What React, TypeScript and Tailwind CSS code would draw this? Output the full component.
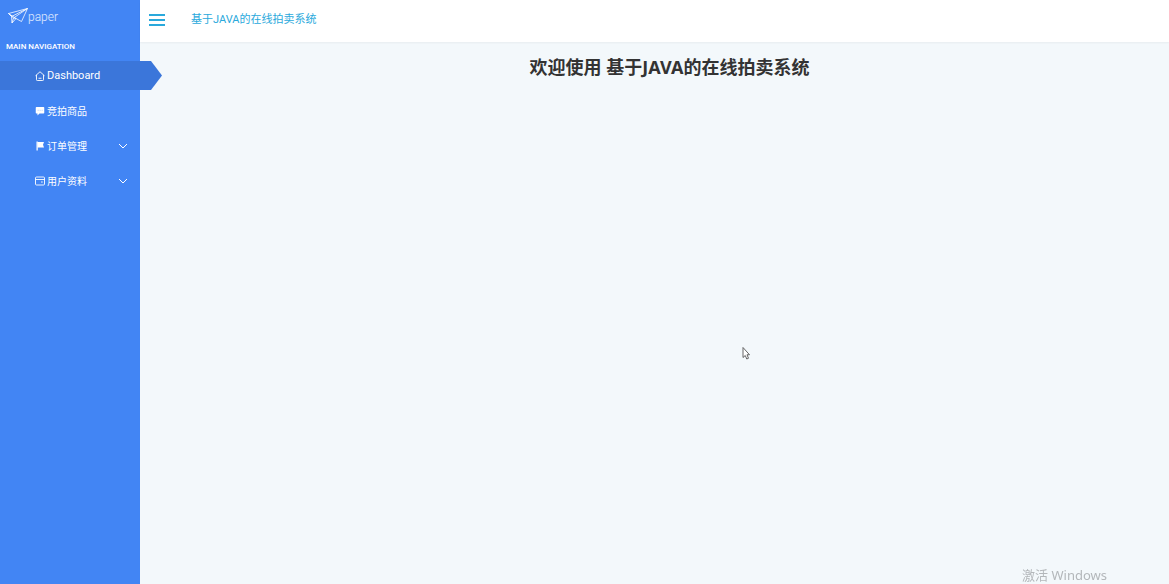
import type { ReactNode } from "react";

type NavItem = {
  label: string;
  icon: ReactNode;
  active?: boolean;
  expandable?: boolean;
};

const items: NavItem[] = [
  {
    label: "Dashboard",
    active: true,
    icon: (
      <svg viewBox="0 0 20 20" className="size-[10px]" fill="none" stroke="currentColor" strokeWidth="1.8" strokeLinejoin="round">
        <path d="M1 9.5 10 1.5l9 8M3 8v9.5q0 1.500 1.500 1.500h11q1.500 0 1.500-1.500V8M7 14.500h6" />
      </svg>
    ),
  },
  {
    label: "竞拍商品",
    icon: (
      <svg viewBox="0 0 20 20" className="size-[10px]" fill="currentColor">
        <path d="M3 2h14q1.500 0 1.500 1.500v10q0 1.500-1.500 1.500H9l-4 4v-4H3q-1.500 0-1.500-1.500v-10Q1.500 2 3 2z" />
        <path d="M5.500 8.500h1.500m2.500 0h1.500m2.500 0h1.500" stroke="#4285f4" strokeWidth="1" />
      </svg>
    ),
  },
  {
    label: "订单管理",
    expandable: true,
    icon: (
      <svg viewBox="0 0 20 20" className="size-[10px]" fill="currentColor">
        <path d="M3 1h2.500v18H3z" />
        <path d="M5 2h13l-2 5.500 2 5.500H5z" />
      </svg>
    ),
  },
  {
    label: "用户资料",
    expandable: true,
    icon: (
      <svg viewBox="0 0 20 20" className="size-[10px]" fill="none" stroke="currentColor" strokeWidth="1.8">
        <rect x="1" y="2" width="18" height="16" rx="2" />
        <path d="M1 7h18M12 12h3.500" />
      </svg>
    ),
  },
];

function Logo() {
  return (
    <a href="#" className="flex h-8 items-center pt-px pl-2 text-white/85">
      <svg viewBox="0 0 40 34" className="h-[17px] w-5" fill="none" stroke="currentColor" strokeWidth="1.8" strokeLinejoin="round">
        <path d="M1 11 39 1 27 27 16 21zM1 11l6 6 32-16L11 20zM7 17l1 13 3-10M8 30l8-9M11 20l5 1" />
      </svg>
      <span className="font-[Roboto,sans-serif] text-xs font-light">paper</span>
    </a>
  );
}

function NavLink({ item }: { item: NavItem }) {
  const content = (
    <>
      {item.icon}
      <span className={item.active ? "pt-0.5 text-[11px]" : "pt-px text-[10px]"}>{item.label}</span>
    </>
  );

  if (item.expandable) {
    return (
      <button type="button" aria-expanded="false" className="flex h-[29px] w-full items-center gap-0.5 pr-3 pl-[35px]">
        {content}
        <svg viewBox="0 0 20 20" className="ml-auto size-[10px]" fill="none" stroke="currentColor" strokeWidth="2">
          <path d="m2 6 8 8 8-8" />
        </svg>
      </button>
    );
  }

  return (
    <a
      href="#"
      className={
        item.active
          ? "relative flex h-[29px] items-center gap-0.5 bg-[#3b76da] pl-[35px]"
          : "flex h-[29px] items-center gap-0.5 pl-[35px]"
      }
    >
      {content}
      {item.active && (
        <svg viewBox="0 0 22 29" className="absolute top-0 left-full h-full w-[22px]" fill="#3b76da">
          <path d="M0 0h11l11 14.500L11 29H0z" />
        </svg>
      )}
    </a>
  );
}

function Sidebar() {
  return (
    <aside className="w-[140px] shrink-0 bg-[#4285f4] text-white">
      <Logo />
      <nav>
        <h2 className="mb-2 px-1.5 pt-2 font-[Roboto,sans-serif] text-[8px] leading-[13px] font-medium">
          MAIN NAVIGATION
        </h2>
        <ul className="space-y-1.5">
          {items.map((item) => (
            <li key={item.label}>
              <NavLink item={item} />
            </li>
          ))}
        </ul>
      </nav>
    </aside>
  );
}

export default function App() {
  return (
    <div className="flex min-h-screen bg-[#f3f8fb] font-[Roboto,'Noto_Sans_CJK_SC',sans-serif]">
      <Sidebar />
      <div className="min-w-0 flex-1">
        <header className="flex h-[42px] items-center bg-white px-[9px] pb-0.5 text-[#2aa9dc] shadow-xs">
          <button type="button" aria-label="Menu" className="flex w-4 flex-col gap-[3px]">
            <span className="h-0.5 bg-current" />
            <span className="h-0.5 bg-current" />
            <span className="h-0.5 bg-current" />
          </button>
          <span className="ml-[26px] text-[11px]">基于JAVA的在线拍卖系统</span>
        </header>
        <main className="pt-[11px] pl-[30px]">
          <h1 className="text-center font-['Noto_Sans','Noto_Sans_CJK_SC',sans-serif] text-lg font-bold text-[#333]">
            欢迎使用 基于JAVA的在线拍卖系统
          </h1>
        </main>
      </div>

      <svg viewBox="0 0 16 26" className="absolute top-[347px] left-[742px] h-[13px] w-2" fill="#fff" stroke="#555" strokeWidth="1.800">
        <path d="M2 1v20l4.500-4 3 7 3.500-1.500-3-7H15z" />
      </svg>
      <p className="fixed right-[62px] bottom-0 font-['Noto_Sans','Noto_Sans_CJK_SC',sans-serif] text-[13px] leading-[18px] text-[#b3b7ba]">
        激活 Windows
      </p>
    </div>
  );
}
